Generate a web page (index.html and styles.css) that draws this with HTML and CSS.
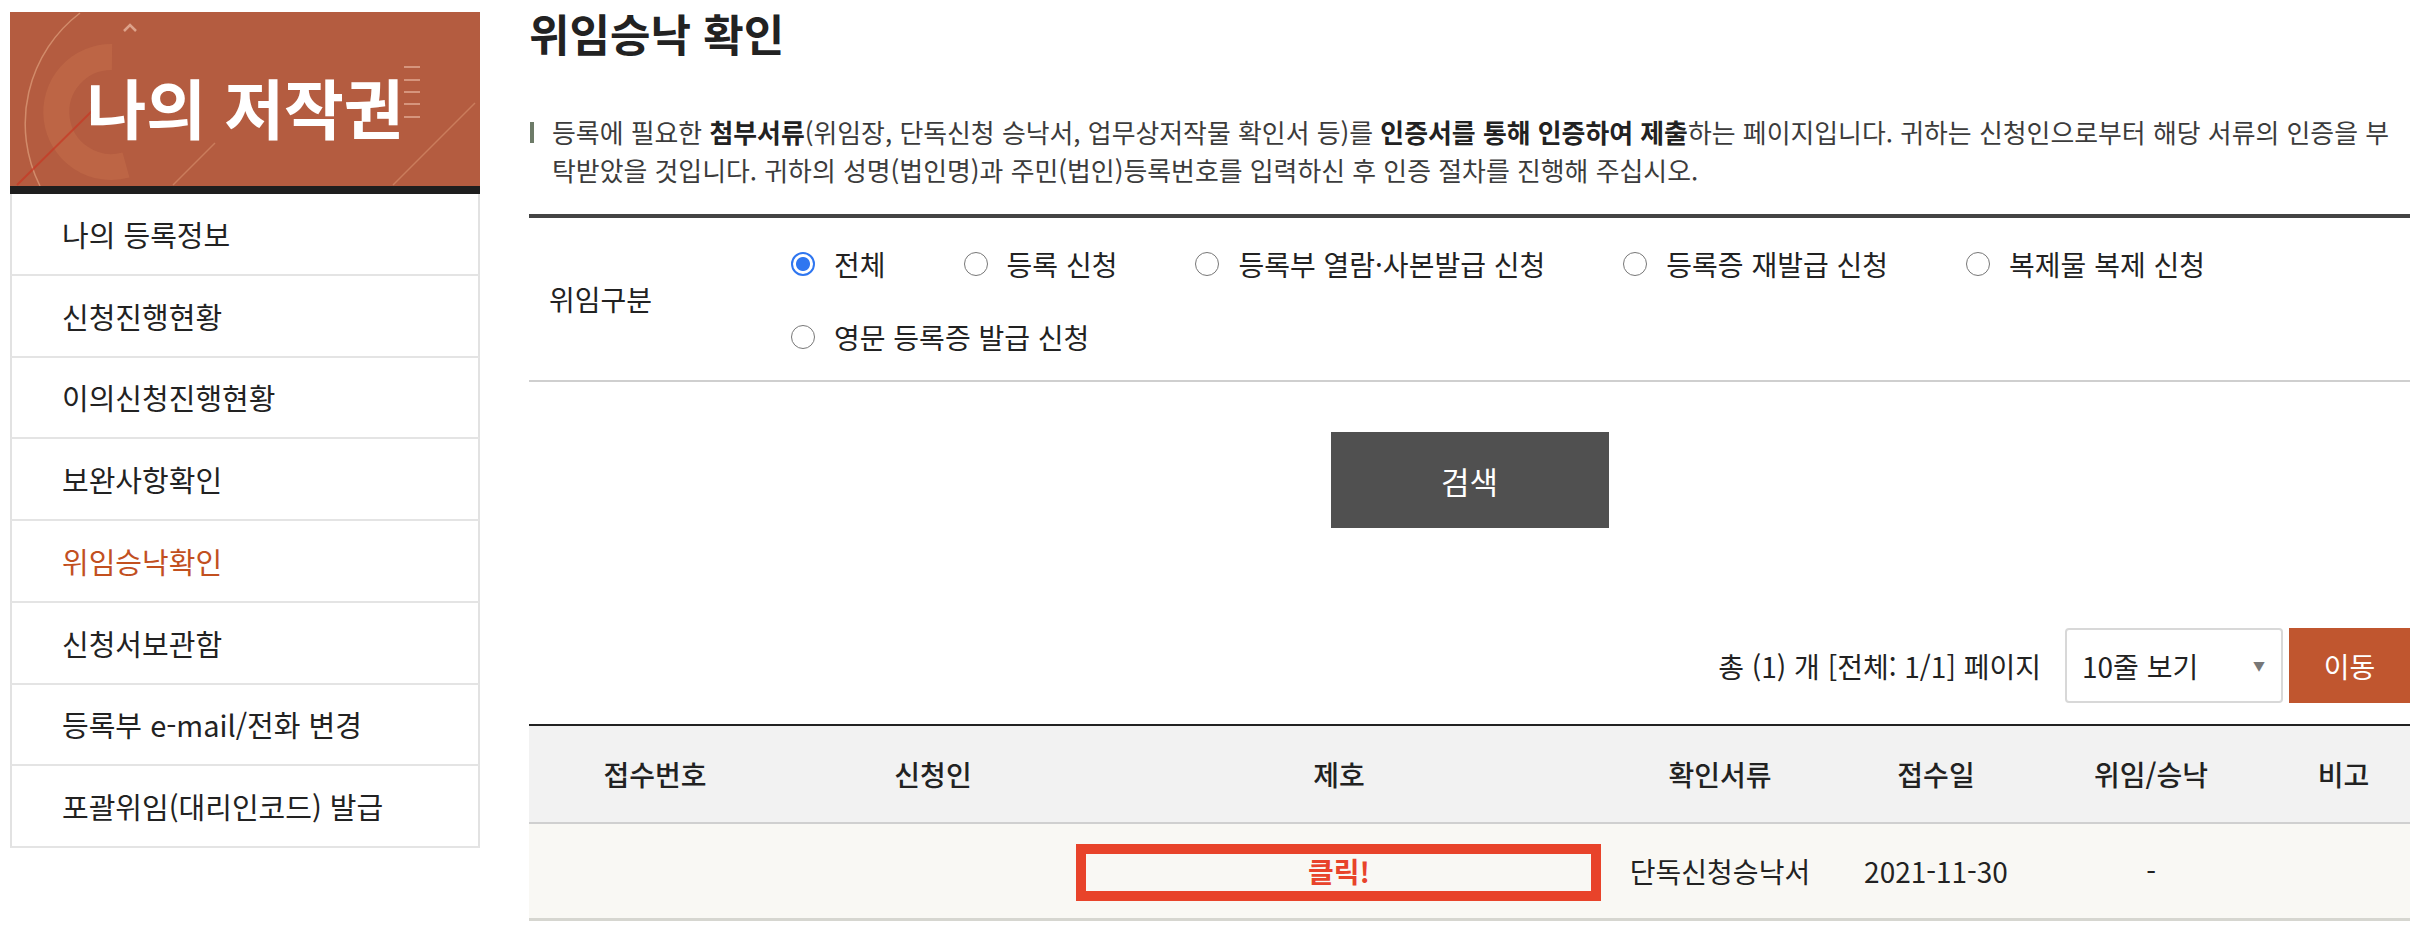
FILE: index.html
```html
<!DOCTYPE html>
<html lang="ko">
<head>
<meta charset="utf-8">
<title>위임승낙 확인</title>
<link rel="stylesheet" href="styles.css">
</head>
<body>
<div class="page">
  <aside class="sidebar">
    <div class="banner">
      <svg class="banner-deco" viewBox="0 0 470 174" width="470" height="174" aria-hidden="true">
        <path d="M102 45 A55 55 0 1 0 116 153" fill="none" stroke="rgba(225,140,90,0.2)" stroke-width="26"/>
        <path d="M70 1 A139 139 0 0 0 30 174" fill="none" stroke="rgba(255,210,170,0.4)" stroke-width="1.5"/>
        <line x1="7" y1="173" x2="83" y2="98" stroke="rgba(200,55,35,0.7)" stroke-width="2"/>
        <line x1="163" y1="173" x2="205" y2="131" stroke="rgba(255,200,160,0.3)" stroke-width="1.5"/>
        <line x1="383" y1="173" x2="465" y2="91" stroke="rgba(255,200,160,0.3)" stroke-width="1.5"/>
        <polyline points="114,19 120,13 126,19" fill="none" stroke="rgba(255,220,200,0.55)" stroke-width="2.5"/>
        <g stroke="rgba(255,220,200,0.45)" stroke-width="2">
          <line x1="394" y1="55" x2="410" y2="55"/>
          <line x1="394" y1="68" x2="410" y2="68"/>
          <line x1="394" y1="80" x2="410" y2="80"/>
          <line x1="394" y1="92" x2="410" y2="92"/>
          <line x1="394" y1="105" x2="410" y2="105"/>
        </g>
      </svg>
      <h2 class="banner-title">나의 저작권</h2>
    </div>
    <ul class="menu">
      <li class="menu-item">나의 등록정보</li>
      <li class="menu-item">신청진행현황</li>
      <li class="menu-item">이의신청진행현황</li>
      <li class="menu-item">보완사항확인</li>
      <li class="menu-item active">위임승낙확인</li>
      <li class="menu-item">신청서보관함</li>
      <li class="menu-item">등록부 e-mail/전화 변경</li>
      <li class="menu-item">포괄위임(대리인코드) 발급</li>
    </ul>
  </aside>

  <main class="main">
    <h1 class="title">위임승낙 확인</h1>
    <p class="desc">등록에 필요한 <strong>첨부서류</strong>(위임장, 단독신청 승낙서, 업무상저작물 확인서 등)를 <strong>인증서를 통해 인증하여 제출</strong>하는 페이지입니다. 귀하는 신청인으로부터 해당 서류의 인증을 부탁받았을 것입니다. 귀하의 성명(법인명)과 주민(법인)등록번호를 입력하신 후 인증 절차를 진행해 주십시오.</p>

    <form class="search-form">
      <div class="form-label">위임구분</div>
      <div class="options">
        <label class="opt"><input class="radio" type="radio" name="kind" checked>전체</label>
        <label class="opt"><input class="radio" type="radio" name="kind">등록 신청</label>
        <label class="opt"><input class="radio" type="radio" name="kind">등록부 열람·사본발급 신청</label>
        <label class="opt"><input class="radio" type="radio" name="kind">등록증 재발급 신청</label>
        <label class="opt"><input class="radio" type="radio" name="kind">복제물 복제 신청</label>
        <label class="opt"><input class="radio" type="radio" name="kind">영문 등록증 발급 신청</label>
      </div>
    </form>

    <div class="btn-row">
      <button class="search-btn" type="button">검색</button>
    </div>

    <div class="list-bar">
      <span class="count">총 (1) 개 [전체: 1/1] 페이지</span>
      <div class="select"><span>10줄 보기</span><span class="arrow">▼</span></div>
      <button class="go-btn" type="button">이동</button>
    </div>

    <table class="list">
      <colgroup>
        <col class="c1"><col class="c2"><col class="c3"><col class="c4"><col class="c5"><col class="c6"><col class="c7">
      </colgroup>
      <thead>
        <tr>
          <th>접수번호</th><th>신청인</th><th>제호</th><th>확인서류</th><th>접수일</th><th>위임/승낙</th><th>비고</th>
        </tr>
      </thead>
      <tbody>
        <tr>
          <td></td>
          <td></td>
          <td class="title-cell"><span class="mark"></span><span class="click">클릭!</span></td>
          <td>단독신청승낙서</td>
          <td>2021-11-30</td>
          <td>-</td>
          <td></td>
        </tr>
      </tbody>
    </table>
  </main>
</div>
</body>
</html>
```

FILE: styles.css
```css
* { box-sizing: border-box; }

body {
  margin: 0;
  background: #fff;
  color: #222;
  font-family: "Noto Sans CJK KR", "Noto Sans KR", "Noto Sans", sans-serif;
}

.page {
  display: flex;
  gap: 49px;
  padding: 0 10px;
}

/* ---------- sidebar ---------- */
.sidebar {
  width: 470px;
  flex: none;
  padding-top: 12px;
}

.banner {
  position: relative;
  height: 182px;
  background: #b45c40;
  border-bottom: 8px solid #1e1e1e;
  overflow: hidden;
  display: flex;
  align-items: center;
  justify-content: center;
  padding-top: 14px;
}

.banner-deco {
  position: absolute;
  left: 0;
  top: 0;
}

.banner-title {
  position: relative;
  margin: 0;
  color: #fff;
  font-size: 65px;
  font-weight: 700;
  line-height: 1;
}

.menu {
  list-style: none;
  margin: 0;
  padding: 0;
}

.menu-item {
  height: 81.75px;
  display: flex;
  align-items: center;
  padding-left: 50px;
  border-left: 2px solid #e2e2e2;
  border-right: 2px solid #e2e2e2;
  border-bottom: 2px solid #e4e4e4;
  font-size: 29px;
  color: #222;
}

.menu-item.active { color: #c2501f; }

/* ---------- main ---------- */
.main {
  flex: 1;
  min-width: 0;
}

.title {
  margin: 0;
  padding-top: 5px;
  font-size: 44px;
  line-height: 56px;
  font-weight: 700;
  color: #222;
}

.desc {
  position: relative;
  margin: 52px 0 0;
  padding-left: 23px;
  font-size: 25.9px;
  line-height: 38px;
  color: #3c3c3c;
}

.desc::before {
  content: "";
  position: absolute;
  left: 1px;
  top: 9px;
  width: 4px;
  height: 21px;
  background: #6d7b68;
}

.desc strong { color: #222; font-weight: 700; }

.search-form {
  margin-top: 25px;
  display: grid;
  grid-template-columns: 262px 1fr;
  border-top: 4px solid #444;
  border-bottom: 2px solid #cfcfcf;
}

.form-label {
  display: flex;
  align-items: center;
  padding-left: 20px;
  font-size: 28px;
  color: #222;
}

.options {
  display: flex;
  flex-wrap: wrap;
  row-gap: 43px;
  padding: 31px 0 28px;
}

.opt {
  display: flex;
  align-items: center;
  height: 30px;
  margin-right: 78px;
  font-size: 28px;
  line-height: 30px;
  color: #222;
  white-space: nowrap;
}

.radio {
  appearance: none;
  -webkit-appearance: none;
  width: 24px;
  height: 24px;
  margin: 0 19px 0 0;
  border-radius: 50%;
  border: 1.5px solid #777;
  background: #fff;
  flex: none;
}

.radio:checked {
  border: 2px solid #2f76f0;
  background: radial-gradient(circle, #2f76f0 0 6.5px, #fff 7.5px);
}

.btn-row {
  display: flex;
  justify-content: center;
  margin-top: 50px;
}

.search-btn {
  width: 278px;
  height: 96px;
  border: 0;
  background: #505050;
  color: #fff;
  font-family: inherit;
  font-size: 31px;
  padding: 0;
}

.list-bar {
  display: flex;
  justify-content: flex-end;
  align-items: center;
  margin-top: 100px;
  height: 75px;
}

.count {
  font-size: 28px;
  color: #222;
  margin-right: 24px;
}

.select {
  width: 218px;
  height: 75px;
  border: 2px solid #d8d8d8;
  border-radius: 4px;
  display: flex;
  align-items: center;
  justify-content: space-between;
  padding: 0 16px 0 15px;
  font-size: 28px;
  color: #222;
}

.select .arrow {
  font-size: 12px;
  color: #777;
}

.go-btn {
  width: 121px;
  height: 75px;
  margin-left: 6px;
  border: 0;
  padding: 0;
  background: #c0562f;
  color: #fff;
  font-family: inherit;
  font-size: 28px;
}

.list {
  width: 100%;
  margin-top: 21px;
  border-collapse: separate;
  border-spacing: 0;
  table-layout: fixed;
  font-size: 28px;
}

.c1 { width: 252px; }
.c2 { width: 304px; }
.c3 { width: 508px; }
.c4 { width: 254px; }
.c5 { width: 178px; }
.c6 { width: 252px; }
.c7 { width: 133px; }

.list th {
  height: 100px;
  background: #f2f2f2;
  border-top: 2px solid #222;
  border-bottom: 2px solid #d0d0d0;
  font-weight: 500;
  color: #222;
  padding: 0;
}

.list td {
  height: 97px;
  background: #f9f8f4;
  border-bottom: 3px solid #d6d6d0;
  text-align: center;
  color: #222;
  padding: 0;
}

.title-cell { position: relative; }

.mark {
  position: absolute;
  left: -9px;
  right: -8px;
  top: 20px;
  bottom: 17px;
  border: 10px solid #e8432a;
}

.click {
  color: #e8432a;
  font-weight: 700;
}
```
